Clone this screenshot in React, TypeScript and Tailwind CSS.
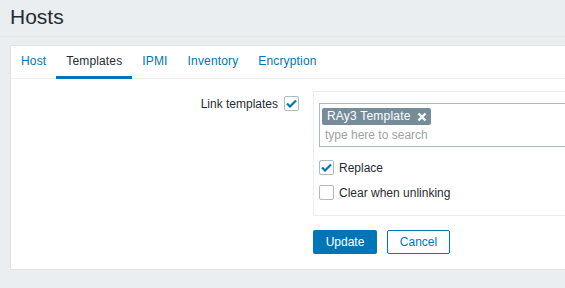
import React from "react";

function Check({ checked }: { checked?: boolean }) {
    return (
        <span className="w-[15px] h-[15px] shrink-0 border border-[#acbbc2] bg-white rounded-[2px] flex items-center justify-center">
            {checked && (
                <svg width="11" height="9" viewBox="0 0 11 9">
                    <path d="M1 4.5l3 3L10 1.5" fill="none" stroke="#0275b8" strokeWidth="2.2" />
                </svg>
            )}
        </span>
    );
}

const tabs = ["Host", "Templates", "IPMI", "Inventory", "Encryption"];

export default function App() {
    return (
        <div className="w-[565px] h-[288px] overflow-hidden bg-[#ebeef0] text-[12px] text-[#1f2c33] font-['Liberation_Sans',Arial,sans-serif]">
            <div className="h-[37px] border-b border-[#e2e6e9] pl-[10px] pt-[5px]">
                <h1 className="text-[21px] leading-[24px] text-[#1f2c33]">Hosts</h1>
            </div>

            <div className="ml-[10px] mt-[8px] w-[570px] h-[225px] bg-white border border-[#dfe4e7]">
                <div className="flex h-[33px] border-b border-[#ebeef0] tracking-[0.15px]">
                    {tabs.map((t) => (
                        <div
                            key={t}
                            className={
                                t === "Templates"
                                    ? "px-[10px] flex items-center border-b-[3px] border-[#0275b8] text-[#1f2c33] mb-[-1px]"
                                    : "px-[10px] flex items-center border-b-[3px] border-transparent text-[#0275b8] mb-[-1px]"
                            }
                        >
                            {t}
                        </div>
                    ))}
                </div>

                <div className="flex pt-[12px]">
                    <div className="w-[288px] shrink-0 flex justify-end items-center gap-[6px] h-[15px] mt-[5px]">
                        <span>Link templates</span>
                        <Check checked />
                    </div>

                    <div className="ml-[14px] shrink-0 flex flex-col">
                        <div className="w-[300px] border border-[#ebeef0] pt-[11px] px-[5px] pb-[15px]">
                            <div className="h-[44px] border border-[#acbbc2] pl-[2px] pt-[3px]">
                                <div className="inline-flex items-center h-[17px] bg-[#768d99] text-white pl-[5px] pr-[4px] gap-[6px] rounded-[2px] tracking-[0.2px]">
                                    <span className="leading-[17px]">RAy3 Template</span>
                                    <svg width="10" height="10" viewBox="0 0 10 10">
                                        <path d="M1.5 1.5l7 7M8.5 1.5l-7 7" stroke="#fff" strokeWidth="2.4" />
                                    </svg>
                                </div>
                                <div className="pl-[3px] leading-[18px] mt-[1px] text-[#9ea2a5]">type here to search</div>
                            </div>

                            <div className="flex items-center gap-[5px] mt-[13px] h-[15px]">
                                <Check checked />
                                <span>Replace</span>
                            </div>
                            <div className="flex items-center gap-[5px] mt-[10px] h-[15px]">
                                <Check />
                                <span>Clear when unlinking</span>
                            </div>
                        </div>

                        <div className="flex gap-[10px] mt-[14px]">
                            <button className="w-[64px] h-[24px] bg-[#0275b8] text-white rounded-[2px] text-[12px]">Update</button>
                            <button className="w-[63px] h-[24px] bg-white border border-[#0275b8] text-[#0275b8] rounded-[2px] text-[12px]">Cancel</button>
                        </div>
                    </div>
                </div>
            </div>
        </div>
    );
}
